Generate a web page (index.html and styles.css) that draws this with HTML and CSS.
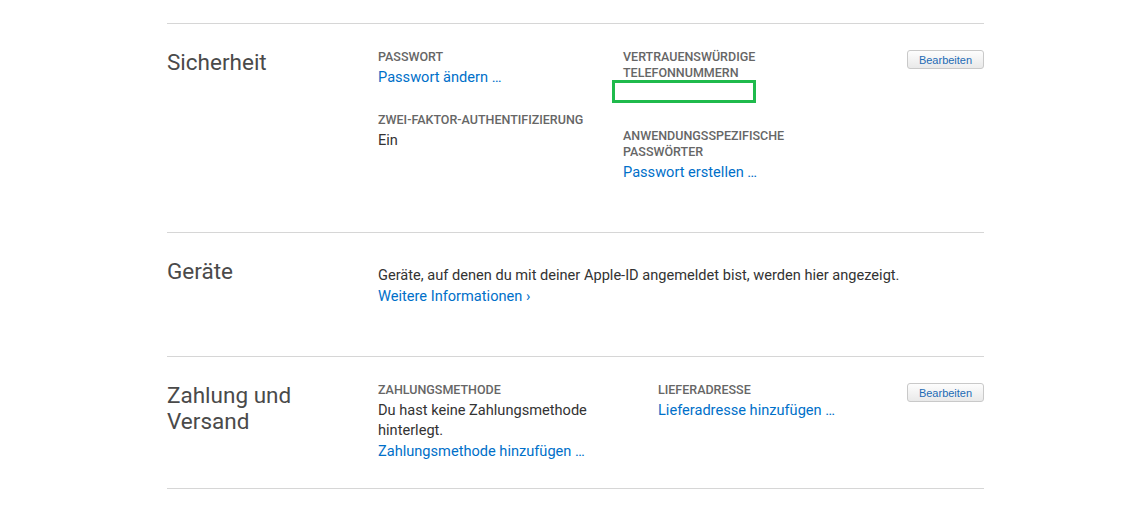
FILE: index.html
```html
<!DOCTYPE html>
<html lang="de">
<head>
<meta charset="utf-8">
<title>Apple-ID</title>
<link rel="stylesheet" href="styles.css">
</head>
<body>
<main class="page">
  <section class="section section-security">
    <h2 class="section-title">Sicherheit</h2>
    <div class="section-body">
      <div class="col col-a">
        <div class="field">
          <div class="label">PASSWORT</div>
          <a class="link" href="#">Passwort ändern …</a>
        </div>
        <div class="field field-gap">
          <div class="label">ZWEI-FAKTOR-AUTHENTIFIZIERUNG</div>
          <div class="value">Ein</div>
        </div>
      </div>
      <div class="col col-b">
        <div class="field">
          <div class="label">VERTRAUENSWÜRDIGE<br>TELEFONNUMMERN</div>
          <div class="phone-box"></div>
        </div>
        <div class="field field-gap2">
          <div class="label">ANWENDUNGSSPEZIFISCHE<br>PASSWÖRTER</div>
          <a class="link" href="#">Passwort erstellen …</a>
        </div>
      </div>
      <button class="btn" type="button">Bearbeiten</button>
    </div>
  </section>

  <section class="section section-devices">
    <h2 class="section-title">Geräte</h2>
    <div class="section-body">
      <div class="col">
        <p class="desc">Geräte, auf denen du mit deiner Apple-ID angemeldet bist, werden hier angezeigt.</p>
        <a class="link" href="#">Weitere Informationen ›</a>
      </div>
    </div>
  </section>

  <section class="section section-payment">
    <h2 class="section-title">Zahlung und<br>Versand</h2>
    <div class="section-body">
      <div class="col col-c">
        <div class="label">ZAHLUNGSMETHODE</div>
        <div class="value value-multi">Du hast keine Zahlungsmethode<br>hinterlegt.</div>
        <a class="link" href="#">Zahlungsmethode hinzufügen …</a>
      </div>
      <div class="col col-d">
        <div class="label">LIEFERADRESSE</div>
        <a class="link" href="#">Lieferadresse hinzufügen …</a>
      </div>
      <button class="btn" type="button">Bearbeiten</button>
    </div>
  </section>
</main>
</body>
</html>
```

FILE: styles.css
```css
* { box-sizing: border-box; }
html, body { margin: 0; padding: 0; background: #fff; }
body {
  font-family: Roboto, "Liberation Sans", Arial, sans-serif;
  color: #333;
  -webkit-font-smoothing: antialiased;
}
.page {
  width: 817px;
  margin: 23px 0 0 167px;
}
.section {
  display: flex;
  border-top: 1px solid #d6d6d6;
  padding-top: 25px;
}
.section-security { padding-bottom: 49px; }
.section-devices { padding-bottom: 49px; }
.section-payment {
  padding-bottom: 26px;
  border-bottom: 1px solid #d6d6d6;
}
.section-title {
  width: 211px;
  flex: none;
  margin: 0;
  font-size: 22.5px;
  line-height: 26px;
  font-weight: 400;
  color: #4a4a4a;
}
.section-body {
  flex: 1;
  display: flex;
  align-items: flex-start;
}
.col-a { width: 245px; }
.col-b { width: 240px; }
.col-c { width: 280px; }
.col-d { width: 240px; }
.label {
  font-size: 12.5px;
  line-height: 16px;
  font-weight: 500;
  color: #666;
}
.link {
  display: block;
  font-size: 14.6px;
  line-height: 22px;
  color: #0070c9;
  text-decoration: none;
}
.label + .link { margin-top: 1px; }
.desc + .link { margin-top: -1px; }
.value {
  font-size: 14.6px;
  line-height: 22px;
  color: #333;
}
.label + .value { margin-top: 1px; }
.label + .value-multi { line-height: 20px; margin-top: 2px; }
.field-gap { margin-top: 24px; }
.field-gap2 { margin-top: 25px; }
.phone-box {
  width: 144px;
  height: 23px;
  margin-left: -11px;
  margin-top: -1px;
  border: 3px solid #1fba4c;
}
.desc {
  margin: 6px 0 0;
  font-size: 14.6px;
  line-height: 22px;
  color: #333;
}
.btn {
  margin-left: auto;
  margin-top: 1px;
  width: 77px;
  height: 19px;
  padding: 0;
  font-family: "Liberation Sans", Arial, sans-serif;
  font-size: 11px;
  color: #1d6bb5;
  background: linear-gradient(#fdfdfd, #e9e9e9);
  border: 1px solid #c9c9c9;
  border-radius: 3px;
}
```
